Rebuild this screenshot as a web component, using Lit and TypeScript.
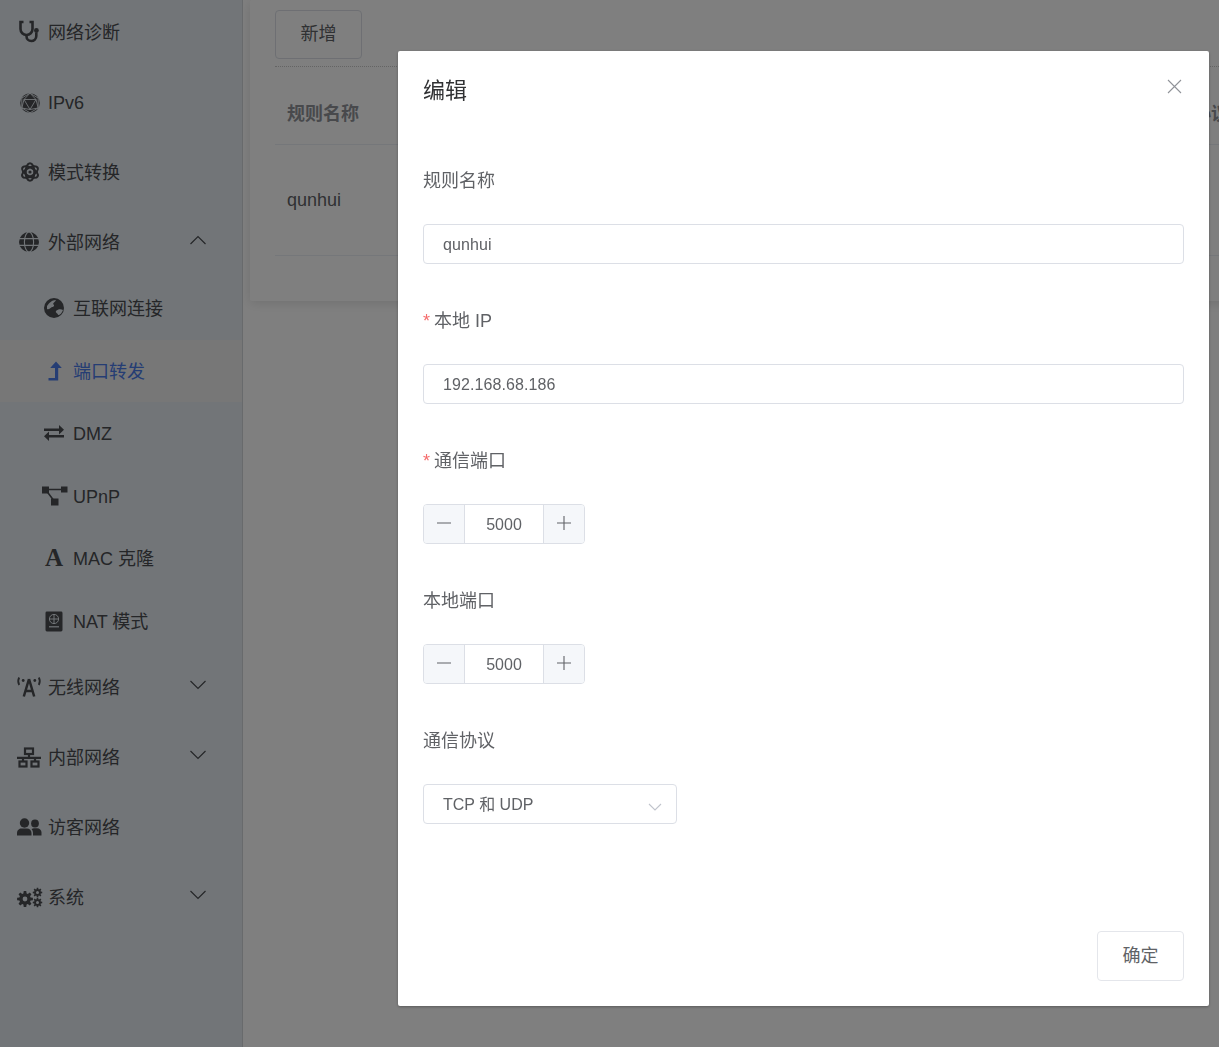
import { LitElement, html, svg, css } from 'lit';
import { customElement } from 'lit/decorators.js';

// toothed outline with a round hole, used for the system icon
const gear = (cx: number, cy: number, outer: number, inner: number, hole: number, teeth: number) => {
  const pts: string[] = [];
  const step = (Math.PI * 2) / teeth;
  for (let i = 0; i < teeth; i++) {
    const a = i * step;
    [
      [a - step * 0.36, inner],
      [a - step * 0.2, outer],
      [a + step * 0.2, outer],
      [a + step * 0.36, inner],
    ].forEach(([t, r]) => {
      pts.push(`${(cx + r * Math.cos(t)).toFixed(2)} ${(cy + r * Math.sin(t)).toFixed(2)}`);
    });
  }
  const ring = `M${cx - hole} ${cy}a${hole} ${hole} 0 1 0 ${hole * 2} 0a${hole} ${hole} 0 1 0 ${-hole * 2} 0z`;
  return svg`<path d=${`M${pts.join('L')}z${ring}`} fill="currentColor" fill-rule="evenodd"></path>`;
};

const icons: Record<string, unknown> = {
  stethoscope: svg`
    <path d="M7.500 3H4.500v7a6 6 0 0 0 12 0V3h-3" fill="none" stroke="currentColor" stroke-width="2.600"></path>
    <path d="M10.500 16v1.200a4.800 4.800 0 0 0 4.800 4.800 5 5 0 0 0 5-5v-3.500" fill="none" stroke="currentColor" stroke-width="2.600"></path>
    <circle cx="20.400" cy="11.500" r="2.400" fill="currentColor"></circle>`,
  d20: svg`
    <circle cx="14" cy="14" r="9.800" fill="currentColor"></circle>
    <path d="M14 4.200 5.800 9v10l8.200 4.800 8.200-4.800V9zM8 10.500h12L14 20.500zM14 4.200 8 10.500 5.800 19 14 20.500 22.200 19 20 10.500z" fill="none" stroke="#e4ebf1" stroke-width="0.900"></path>`,
  atom: svg`
    <g fill="none" stroke="currentColor" stroke-width="2.100">
      <ellipse cx="14" cy="13" rx="4.300" ry="8.800"></ellipse>
      <ellipse cx="14" cy="13" rx="4.300" ry="8.800" transform="rotate(60 14 13)"></ellipse>
      <ellipse cx="14" cy="13" rx="4.300" ry="8.800" transform="rotate(120 14 13)"></ellipse>
    </g>
    <circle cx="14" cy="13" r="1.600" fill="currentColor"></circle>`,
  globe: svg`
    <circle cx="13" cy="13" r="10" fill="currentColor"></circle>
    <g fill="none" stroke="#e4ebf1" stroke-width="1.100">
      <path d="M3 9.600h20M3 16.400h20"></path>
      <ellipse cx="13" cy="13" rx="4.600" ry="10"></ellipse>
    </g>`,
  asia: svg`
    <circle cx="13" cy="13" r="10" fill="currentColor"></circle>
    <path d="M6 11c2-3 5-6 9-6-1 2-2 2-3 4 2 1 1 3-1 3-2 1-3 3-5 2zM15 16c2-2 5-2 7-1-1 3-3 5-5 5 0-2-3-2-2-4z" fill="#e4ebf1"></path>`,
  forward: svg`
    <path d="M15 3.500 20.800 10H17.200v12.500H7.500V20H14V10H9.200z" fill="currentColor"></path>`,
  exchange: svg`
    <path d="M3 8.400h15V5l5 4.800-5 4.800V11H3zM23 15H8v-3.600l-5 4.800 5 4.800v-3.400h15z" fill="currentColor"></path>`,
  upnp: svg`
    <g fill="currentColor">
      <rect x="1" y="3.500" width="7" height="7"></rect>
      <rect x="20" y="3.500" width="6.500" height="6"></rect>
      <rect x="10" y="15.500" width="7.500" height="7"></rect>
    </g>
    <path d="M7 6.500h14M6 8.500l6 8" fill="none" stroke="currentColor" stroke-width="1.600"></path>`,
  letter: svg`
    <text x="13" y="21" text-anchor="middle" font-family="Liberation Serif, serif" font-weight="700" font-size="25" fill="currentColor">A</text>`,
  passport: svg`
    <rect x="4.500" y="3.500" width="17" height="20" rx="1.400" fill="currentColor"></rect>
    <circle cx="13" cy="11" r="4.600" fill="none" stroke="#e4ebf1" stroke-width="1"></circle>
    <path d="M8.400 11h9.200M13 6.400v9.200" fill="none" stroke="#e4ebf1" stroke-width="1"></path>
    <path d="M8 18.800h10" fill="none" stroke="#e4ebf1" stroke-width="1.200"></path>`,
  antenna: svg`
    <path d="M13 5 7.800 22.500M13 5l5.200 17.500M9.500 17h7" fill="none" stroke="currentColor" stroke-width="2.500"></path>
    <g fill="none" stroke="currentColor" stroke-width="1.800">
      <path d="M3.200 3.500c-1.400 2.500-1.400 5 0 7.500M22.800 3.500c1.400 2.500 1.400 5 0 7.500"></path>
    </g>
    <circle cx="7.200" cy="6.500" r="1.400" fill="currentColor"></circle>
    <circle cx="18.800" cy="6.500" r="1.400" fill="currentColor"></circle>`,
  network: svg`
    <g fill="none" stroke="currentColor" stroke-width="2.200">
      <rect x="9" y="4.500" width="8" height="5.500"></rect>
      <rect x="3.500" y="17.500" width="7" height="5"></rect>
      <rect x="15.500" y="17.500" width="7" height="5"></rect>
      <path d="M1 13.800h24M13 10v4M7 13.800v3.700M19 13.800v3.700"></path>
    </g>`,
  users: svg`
    <g fill="currentColor">
      <circle cx="8.500" cy="9" r="4.700"></circle>
      <circle cx="19" cy="9.500" r="3.900"></circle>
      <path d="M1 21.500v-2.500c0-3 2.500-4.500 4-4.500h6c2.500 0 4.500 2 4.500 4.500v2.500z"></path>
      <path d="M17 21.500V19c0-1.500-.6-3-1.600-4 1-.5 2-.7 3.600-.7h2c2.500 0 4.500 2 4.500 4v3.200z"></path>
    </g>`,
  gears: svg`
    ${gear(9, 15, 8, 5.800, 2.400, 8)}
    ${gear(21.500, 8.500, 4.800, 3.400, 1.500, 8)}
    ${gear(21.500, 18.500, 4.800, 3.400, 1.500, 8)}`,
};

interface NavItem {
  label: string;
  icon: string;
  arrow?: 'up' | 'down';
  sub?: boolean;
  active?: boolean;
}

const nav: NavItem[] = [
  { label: '网络诊断', icon: 'stethoscope' },
  { label: 'IPv6', icon: 'd20' },
  { label: '模式转换', icon: 'atom' },
  { label: '外部网络', icon: 'globe', arrow: 'up' },
  { label: '互联网连接', icon: 'asia', sub: true },
  { label: '端口转发', icon: 'forward', sub: true, active: true },
  { label: 'DMZ', icon: 'exchange', sub: true },
  { label: 'UPnP', icon: 'upnp', sub: true },
  { label: 'MAC 克隆', icon: 'letter', sub: true },
  { label: 'NAT 模式', icon: 'passport', sub: true },
  { label: '无线网络', icon: 'antenna', arrow: 'down' },
  { label: '内部网络', icon: 'network', arrow: 'down' },
  { label: '访客网络', icon: 'users' },
  { label: '系统', icon: 'gears', arrow: 'down' },
];

const fields = ['规则名称', '本地 IP', '通信端口', '本地端口', '通信协议'];

@customElement('app-root')
export class AppRoot extends LitElement {
  static styles = css`
    :host {
      display: block;
      height: 100vh;
      overflow: hidden;
      font-family: 'Liberation Sans', 'Noto Sans CJK SC', sans-serif;
      font-size: 18px;
      color: #606266;
      background: #fff;
    }

    .layout {
      display: flex;
      height: 100%;
    }

    .sidebar {
      flex: none;
      width: 242px;
      background: #e4ebf1;
      border-right: 1px solid #d0d4d8;
    }

    .menu {
      margin-top: -3px;
    }

    .item {
      display: flex;
      align-items: center;
      height: 70px;
      padding-left: 16px;
      gap: 6px;
      color: #4a4c50;
    }

    .item svg.icon {
      flex: none;
      width: 26px;
      height: 26px;
      overflow: visible;
    }

    .item.sub {
      height: 62.5px;
      padding-left: 41px;
    }

    .item.active {
      background: #efefef;
      color: #4a7ae8;
    }

    /* the CJK fallback sits lower in the line than latin text */
    .cjk {
      padding-bottom: 2px;
    }

    .latin {
      padding-top: 3px;
    }

    .arrow {
      flex: none;
      width: 18px;
      height: 10px;
      margin: -4px 35px 0 auto;
      color: #4a4c50;
    }

    .main {
      flex: 1;
      min-width: 0;
      padding-left: 7px;
      overflow: hidden;
    }

    .card {
      width: 1100px;
      padding: 10px 25px 45px;
      background: #fff;
      border-radius: 2px;
      box-shadow: 0 2px 12px rgba(0, 0, 0, 0.12);
    }

    .btn {
      display: flex;
      align-items: center;
      justify-content: center;
      width: 87px;
      height: 49px;
      box-sizing: border-box;
      padding-bottom: 5px;
      border: 1px solid #dcdfe6;
      border-radius: 4px;
      background: #fff;
      color: #606266;
    }

    .table {
      margin-top: 7px;
      border-top: 1px dotted #c8c8c8;
    }

    .tr {
      display: flex;
      align-items: center;
      padding-left: 12px;
      border-bottom: 1px solid #ebeef5;
    }

    .tr.head {
      height: 78px;
      box-sizing: border-box;
      padding-top: 12px;
      font-weight: 700;
      color: #909399;
    }

    .tr.body {
      height: 110px;
    }

    .col {
      width: 906px;
      flex: none;
    }

    .overlay {
      position: fixed;
      inset: 0;
      display: flex;
      justify-content: flex-end;
      padding: 51px 10px 41px 0;
      background: rgba(0, 0, 0, 0.5);
    }

    .modal {
      position: relative;
      display: flex;
      flex-direction: column;
      width: 811px;
      background: #fff;
      border-radius: 2px;
      box-shadow: 0 1px 3px rgba(0, 0, 0, 0.3);
    }

    .modal-head {
      padding: 25px 25px 0;
      font-size: 22px;
      line-height: 30px;
      color: #303133;
    }

    .close {
      position: absolute;
      top: 28px;
      right: 27px;
      width: 15px;
      height: 15px;
      color: #909399;
    }

    .form {
      display: flex;
      flex-direction: column;
      gap: 37px;
      padding: 55px 25px 0;
    }

    .label {
      height: 40px;
      margin-bottom: 23px;
      line-height: 41px;
    }

    .req {
      margin-right: 4px;
      color: #f56c6c;
    }

    .input {
      display: block;
      width: 100%;
      height: 40px;
      box-sizing: border-box;
      padding: 2px 19px 0;
      border: 1px solid #dcdfe6;
      border-radius: 4px;
      outline: none;
      background: #fff;
      font: inherit;
      font-size: 16px;
      letter-spacing: 0.1px;
      color: #606266;
    }

    .stepper {
      display: flex;
      width: 162px;
      height: 40px;
      box-sizing: border-box;
      border: 1px solid #dcdfe6;
      border-radius: 4px;
      overflow: hidden;
      font-size: 16px;
    }

    .step {
      display: flex;
      flex: none;
      align-items: center;
      justify-content: center;
      width: 41px;
      padding-bottom: 2px;
      box-sizing: border-box;
      background: #f5f7fa;
      color: #606266;
    }

    .step svg {
      width: 14px;
      height: 14px;
    }

    .step.minus {
      border-right: 1px solid #dcdfe6;
    }

    .step.plus {
      border-left: 1px solid #dcdfe6;
    }

    .value {
      flex: 1;
      line-height: 40px;
      text-align: center;
    }

    .select {
      display: flex;
      align-items: center;
      justify-content: space-between;
      width: 254px;
      height: 40px;
      box-sizing: border-box;
      padding: 0 14px 0 19px;
      border: 1px solid #dcdfe6;
      border-radius: 4px;
      font-size: 16px;
    }

    .select span {
      padding-bottom: 2px;
    }

    .select svg {
      width: 14px;
      height: 8px;
      margin-top: 5px;
      color: #c0c4cc;
    }

    .modal-foot {
      display: flex;
      justify-content: flex-end;
      margin-top: auto;
      padding: 0 25px 25px;
    }

    .btn.ok {
      height: 50px;
      border-color: #e4e6eb;
    }
  `;

  private renderItem(item: NavItem) {
    const cls = `item${item.sub ? ' sub' : ''}${item.active ? ' active' : ''}`;
    const script = /^[\x00-\x7f]+$/.test(item.label) ? 'latin' : 'cjk';
    return html`
      <div class=${cls}>
        <svg class="icon" viewBox="0 0 26 26">${icons[item.icon]}</svg>
        <span class=${script}>${item.label}</span>
        ${item.arrow
          ? html`<svg class="arrow" viewBox="0 0 18 10">
              <path
                d=${item.arrow === 'up' ? 'M1.500 9 9 1.500 16.500 9' : 'M1.500 1 9 8.500 16.500 1'}
                fill="none"
                stroke="currentColor"
                stroke-width="1.200"
              ></path>
            </svg>`
          : ''}
      </div>
    `;
  }

  private renderStepper(value: string) {
    return html`
      <div class="stepper">
        <div class="step minus">
          <svg viewBox="0 0 14 14"><path d="M0 7h14" stroke="currentColor" stroke-width="1.100"></path></svg>
        </div>
        <div class="value">${value}</div>
        <div class="step plus">
          <svg viewBox="0 0 14 14"><path d="M0 7h14M7 0v14" stroke="currentColor" stroke-width="1.100"></path></svg>
        </div>
      </div>
    `;
  }

  render() {
    return html`
      <div class="layout">
        <aside class="sidebar">
          <div class="menu">${nav.map(item => this.renderItem(item))}</div>
        </aside>
        <main class="main">
          <section class="card">
            <div class="btn">新增</div>
            <div class="table">
              <div class="tr head">
                <div class="col">规则名称</div>
                <div>协议</div>
              </div>
              <div class="tr body">
                <div class="col">qunhui</div>
              </div>
            </div>
          </section>
        </main>
      </div>

      <div class="overlay">
        <div class="modal">
          <div class="modal-head">编辑</div>
          <svg class="close" viewBox="0 0 15 15">
            <path d="M1 1l13 13M14 1 1 14" fill="none" stroke="currentColor" stroke-width="1.100"></path>
          </svg>
          <div class="form">
            <div>
              <div class="label">${fields[0]}</div>
              <input class="input" .value=${'qunhui'} />
            </div>
            <div>
              <div class="label"><span class="req">*</span>${fields[1]}</div>
              <input class="input" .value=${'192.168.68.186'} />
            </div>
            <div>
              <div class="label"><span class="req">*</span>${fields[2]}</div>
              ${this.renderStepper('5000')}
            </div>
            <div>
              <div class="label">${fields[3]}</div>
              ${this.renderStepper('5000')}
            </div>
            <div>
              <div class="label">${fields[4]}</div>
              <div class="select">
                <span>TCP 和 UDP</span>
                <svg viewBox="0 0 14 8">
                  <path d="M1 1l6 6 6-6" fill="none" stroke="currentColor" stroke-width="1.100"></path>
                </svg>
              </div>
            </div>
          </div>
          <div class="modal-foot">
            <div class="btn ok">确定</div>
          </div>
        </div>
      </div>
    `;
  }
}
